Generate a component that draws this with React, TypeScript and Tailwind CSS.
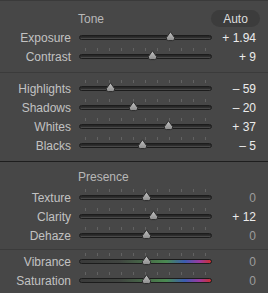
import React from "react";

const TICKS = [-5, -4, -3, -2, -1, 0, 1, 2, 3, 4, 5];

function Thumb({ x }: { x: number }) {
  return (
    <svg
      width="11"
      height="11"
      viewBox="0 0 11 11"
      className="absolute"
      style={{ left: x - 5.5, top: -4 }}
    >
      <defs>
        <linearGradient id="tg" x1="0" y1="0" x2="0" y2="1">
          <stop offset="0" stopColor="#c4c4c4" />
          <stop offset="1" stopColor="#8c8c8c" />
        </linearGradient>
      </defs>
      <path
        d="M5.5 0.8 L9.6 6.6 Q10.2 9.6 7.6 9.6 H3.4 Q0.8 9.6 1.4 6.6 Z"
        fill="url(#tg)"
        stroke="#2a2a2a"
        strokeWidth="1"
      />
    </svg>
  );
}

function Slider({
  pos,
  ticks = true,
  color = false,
}: {
  pos: number;
  ticks?: boolean;
  color?: boolean;
}) {
  const w = 133;
  const center = w / 2;
  return (
    <div className="relative w-[133px] h-[5px]">
      {ticks && (
        <div className="absolute left-0 top-[-6px] w-full h-[3px]">
          {TICKS.map((t) => (
            <div
              key={t}
              className="absolute top-0 w-px h-[3px] bg-[#626262]"
              style={{ left: center + t * 12 - 0.5 }}
            />
          ))}
        </div>
      )}
      <div
        className={
          color
            ? "absolute inset-0 rounded-full border border-[#1c1c1c] bg-[linear-gradient(90deg,#3a3a3a_0%,#404440_30%,#4a7a4c_58%,#4a8a52_66%,#3c5cb0_80%,#9a3aa0_91%,#cc3030_100%)]"
            : "absolute inset-0 rounded-full border border-[#1c1c1c] bg-[linear-gradient(180deg,#232323_0%,#2e2e2e_50%,#555555_100%)]"
        }
      />
      <Thumb x={pos} />
    </div>
  );
}

function Row({
  label,
  value,
  pos,
  ticks = true,
  color = false,
  zero = false,
}: {
  label: string;
  value: string;
  pos: number;
  ticks?: boolean;
  color?: boolean;
  zero?: boolean;
}) {
  return (
    <div className="flex items-center h-[19px]">
      <div className="w-[71px] text-right text-[#c2c2c2] leading-none">
        {label}
      </div>
      <div className="ml-[8px] flex items-center">
        <Slider pos={pos} ticks={ticks} color={color} />
      </div>
      <div
        className={
          zero
            ? "flex-1 text-right pr-[12px] text-[#9c9c9c] leading-none"
            : "flex-1 text-right pr-[12px] text-[#ececec] leading-none"
        }
      >
        {value}
      </div>
    </div>
  );
}

export default function App() {
  return (
    <div
      className="w-[268px] h-[293px] bg-[#474747] border-t border-[#3a3a3a] overflow-hidden text-[12px]"
      style={{ fontFamily: '"Liberation Sans", Arial, sans-serif' }}
    >
      <div className="flex items-center h-[19px] mt-[8px]">
        <div className="ml-[78px] text-[12px] text-[#b8b8b8]">Tone</div>
        <div className="ml-auto mr-[8px] w-[49px] h-[17px] rounded-full bg-[#3c3c3c] flex items-center justify-center text-[12px] text-[#dcdcdc]">
          Auto
        </div>
      </div>
      <Row label="Exposure" value="+ 1.94" pos={91} ticks={false} />
      <Row label="Contrast" value="+ 9" pos={73} />
      <div className="h-[6px]" />
      <div className="h-px bg-[#3b3b3b]" />
      <div className="h-[6px]" />
      <Row label="Highlights" value="– 59" pos={31} />
      <Row label="Shadows" value="– 20" pos={54} />
      <Row label="Whites" value="+ 37" pos={89} />
      <Row label="Blacks" value="– 5" pos={63} />
      <div className="h-[6px]" />
      <div className="h-px bg-[#1e1e1e]" />
      <div className="flex items-center h-[22px] mt-[4px]">
        <div className="ml-[78px] text-[12px] text-[#b8b8b8]">Presence</div>
      </div>
      <Row label="Texture" value="0" pos={67} zero />
      <Row label="Clarity" value="+ 12" pos={74} />
      <Row label="Dehaze" value="0" pos={67} zero />
      <div className="h-[4px]" />
      <div className="h-px bg-[#3b3b3b]" />
      <div className="h-[2px]" />
      <Row label="Vibrance" value="0" pos={67} zero color />
      <Row label="Saturation" value="0" pos={67} zero color />
    </div>
  );
}
